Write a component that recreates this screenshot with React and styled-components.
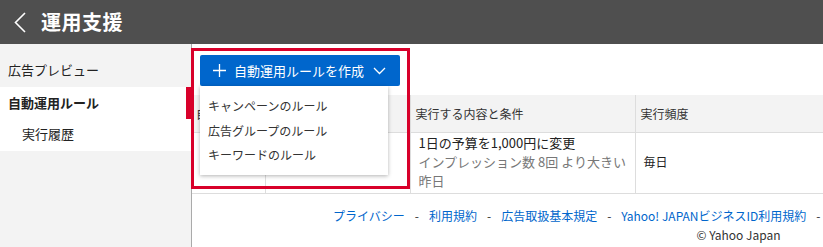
import React from "react";
import styled, { createGlobalStyle } from "styled-components";

const Global = createGlobalStyle`
  html, body { margin: 0; padding: 0; background: #fff; }
  body { font-family: "Noto Sans CJK JP", "Noto Sans", sans-serif; color: #333; font-size: 13px; }
  * { box-sizing: border-box; }
`;

const Page = styled.div`
  width: 823px;
  height: 247px;
  overflow: hidden;
  display: flex;
  flex-direction: column;
`;

const Header = styled.header`
  height: 44px;
  flex: none;
  background: #4f4f4f;
  display: flex;
  align-items: center;
  padding-left: 14px;
  gap: 15px;
`;

const Title = styled.h1`
  margin: 0;
  font-size: 20px;
  font-weight: 700;
  color: #fff;
  line-height: 24px;
  letter-spacing: 0.5px;
`;

const Body = styled.div`
  flex: 1;
  display: flex;
  min-height: 0;
`;

const Sidebar = styled.nav`
  width: 191px;
  flex: none;
  background: #f3f3f3;
  display: flex;
  flex-direction: column;
`;

const NavItem = styled.div`
  height: ${(p) => p.$h || 32}px;
  padding-top: ${(p) => p.$pt || 6}px;
  line-height: 20px;
  padding-left: ${(p) => (p.$sub ? 22 : 8)}px;
  font-size: 13px;
  font-weight: ${(p) => (p.$active ? 700 : 400)};
  color: #222;
  background: ${(p) => (p.$white ? "#fff" : "transparent")};
  position: relative;
  ${(p) =>
    p.$active &&
    `&::after { content: ""; position: absolute; right: 0; top: 0; bottom: 0; width: 5px; background: #d8002a; }`}
`;

const Main = styled.main`
  flex: 1;
  border-left: 1px solid #aaa;
  background: #fff;
  display: flex;
  flex-direction: column;
  position: relative;
`;

const Toolbar = styled.div`
  padding: 11px 0 0 8px;
  position: relative;
  height: 51px;
`;

const MenuWrap = styled.div`
  position: relative;
  width: 200px;
`;

const CreateButton = styled.button`
  width: 200px;
  height: 31px;
  border: none;
  border-radius: 2px;
  background: #0066cc;
  color: #fff;
  font-family: inherit;
  font-size: 13px;
  display: flex;
  align-items: center;
  padding: 0 0 0 13px;
  gap: 8px;
  cursor: pointer;
`;

const Dropdown = styled.ul`
  position: absolute;
  left: 0;
  top: 31px;
  width: 188px;
  margin: 0;
  padding: 8px 0 7px;
  list-style: none;
  background: #fff;
  box-shadow: 0 1px 4px rgba(0, 0, 0, 0.3);
  z-index: 3;
`;

const DropItem = styled.li`
  height: 24.5px;
  line-height: 24.5px;
  padding-left: 8px;
  font-size: 12px;
  color: #333;
`;

const Highlight = styled.div`
  position: absolute;
  left: -1px;
  top: 4px;
  width: 219px;
  height: 141px;
  border: 3px solid #d8002a;
  z-index: 4;
  pointer-events: none;
`;

const Table = styled.table`
  border-collapse: collapse;
  width: 631px;
  table-layout: fixed;
  border-right: 1px solid #ddd;
`;

const Th = styled.th`
  height: 37px;
  background: #f3f3f3;
  border-left: 1px solid #ddd;
  border-bottom: 1px solid #ddd;
  text-align: left;
  font-weight: 400;
  font-size: 12px;
  color: #333;
  padding: 0 5px;
  white-space: nowrap;
  overflow: hidden;
  &:first-child { border-left: none; padding-left: 4px; }
`;

const Td = styled.td`
  height: 61px;
  border-left: 1px solid #ddd;
  border-bottom: 1px solid #ddd;
  vertical-align: middle;
  padding: 0 8px 2px;
  font-size: ${(p) => p.$size || 13}px;
  line-height: 19px;
  color: #222;
  &:first-child { border-left: none; }
`;

const Sub = styled.div`
  color: #777;
`;

const Footer = styled.footer`
  display: flex;
  flex-direction: column;
  align-items: flex-end;
  padding-top: 12px;
  font-size: 12px;
  line-height: 19px;
`;

const LinkRow = styled.div`
  display: flex;
  gap: 10px;
  padding-right: 3px;
  white-space: nowrap;
`;

const FLink = styled.a`
  color: #0066cc;
  text-decoration: none;
`;

const Dash = styled.span`
  color: #333;
`;

const Copy = styled.div`
  color: #333;
  padding-right: 43px;
`;

const links = ["プライバシー", "利用規約", "広告取扱基本規定", "Yahoo! JAPANビジネスID利用規約"];

export default function App() {
  return (
    <Page>
      <Global />
      <Header>
        <svg width="12" height="21" viewBox="0 0 12 21">
          <polyline points="11,1 1.5,10.5 11,20" fill="none" stroke="#fff" strokeWidth="1.6" />
        </svg>
        <Title>運用支援</Title>
      </Header>
      <Body>
        <Sidebar>
          <NavItem $h={43} $pt={16}>広告プレビュー</NavItem>
          <NavItem $white $active $pt={6}>自動運用ルール</NavItem>
          <NavItem $white $sub $pt={5}>実行履歴</NavItem>
        </Sidebar>
        <Main>
          <Toolbar>
            <MenuWrap>
              <CreateButton>
                <svg width="13" height="13" viewBox="0 0 13 13">
                  <path d="M6.5 0v13M0 6.5h13" stroke="#fff" strokeWidth="1.3" />
                </svg>
                <span>自動運用ルールを作成</span>
                <svg width="13" height="8" viewBox="0 0 13 8" style={{ marginLeft: 1 }}>
                  <polyline points="1,1 6.5,6.5 12,1" fill="none" stroke="#fff" strokeWidth="1.3" />
                </svg>
              </CreateButton>
              <Dropdown>
                <DropItem>キャンペーンのルール</DropItem>
                <DropItem>広告グループのルール</DropItem>
                <DropItem>キーワードのルール</DropItem>
              </Dropdown>
            </MenuWrap>
            <Highlight />
          </Toolbar>
          <Table>
            <colgroup>
              <col style={{ width: 73 }} />
              <col style={{ width: 145 }} />
              <col style={{ width: 225 }} />
              <col style={{ width: 188 }} />
            </colgroup>
            <thead>
              <tr>
                <Th>自</Th>
                <Th></Th>
                <Th>実行する内容と条件</Th>
                <Th>実行頻度</Th>
              </tr>
            </thead>
            <tbody>
              <tr>
                <Td></Td>
                <Td></Td>
                <Td>
                  <div>1日の予算を1,000円に変更</div>
                  <Sub>インプレッション数 8回 より大きい</Sub>
                  <Sub>昨日</Sub>
                </Td>
                <Td $size={12}>毎日</Td>
              </tr>
            </tbody>
          </Table>
          <Footer>
            <LinkRow>
              {links.map((l) => (
                <React.Fragment key={l}>
                  <FLink href="#">{l}</FLink>
                  <Dash>-</Dash>
                </React.Fragment>
              ))}
            </LinkRow>
            <Copy>© Yahoo Japan</Copy>
          </Footer>
        </Main>
      </Body>
    </Page>
  );
}
